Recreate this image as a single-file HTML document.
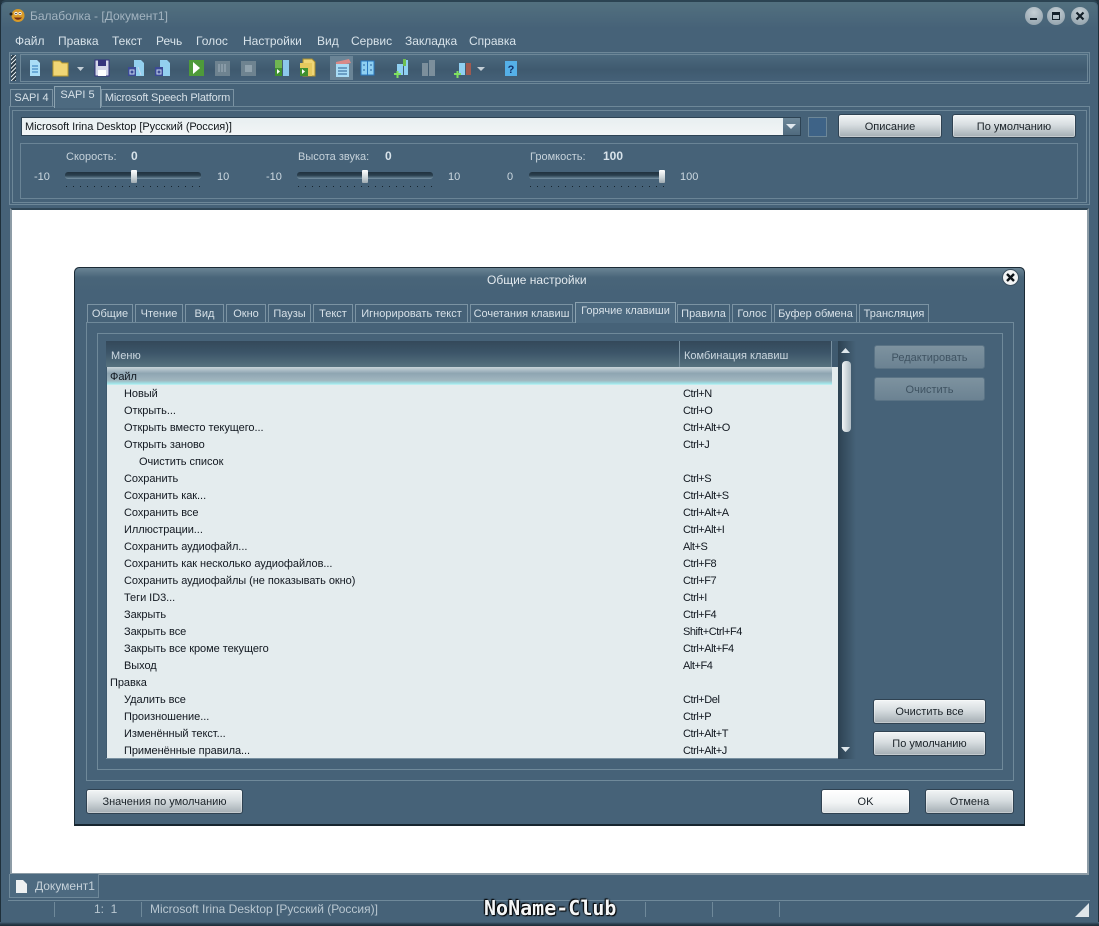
<!DOCTYPE html>
<html><head><meta charset="utf-8"><style>
html,body{margin:0;padding:0;width:1099px;height:926px;overflow:hidden;background:#22333f}
body{position:relative;font-family:"Liberation Sans","Noto Sans CJK SC",sans-serif;font-size:11px;filter:blur(.3px)}
div,span,svg{position:absolute;box-sizing:border-box}
.t{white-space:nowrap;line-height:14px;color:#ccd8e0}
.m{white-space:nowrap;line-height:14px;color:#d8e3ea;font-size:12px;top:34px}
.k{white-space:nowrap;line-height:14px;color:#121820;letter-spacing:-.05px}
.c{letter-spacing:-.45px}
.b{border-radius:3px;background:linear-gradient(#f2f5f6,#d7dde0 45%,#a3adb3);border:1px solid #2f4252;color:#1a2228;text-align:center;line-height:25px;box-shadow:inset 0 0 0 1px rgba(255,255,255,.35)}
.d{border-radius:3px;background:linear-gradient(#7d929f,#6b8292);color:#3f5362;text-align:center;line-height:24px;border:1px solid #5a7385}
.tab{top:304px;height:18px;background:#466278;border:1px solid #7b93a3;border-bottom:none;text-align:center;color:#d6e0e7;line-height:19px;white-space:nowrap}
.tr{height:7px;width:136px;top:172px;border-radius:3px;background:linear-gradient(#20323f,#2b404f 55%,#5e7a8c);border-bottom:1px solid #6f899a}
.th{width:6px;height:13px;top:170px;border-radius:1px;background:linear-gradient(#fff,#c9d2d6 60%,#9fabb2)}
.ti{height:1px;width:136px;top:186px;background:repeating-linear-gradient(90deg,#16242e 0 1px,transparent 1px 7px)}
</style></head><body>
<div style="left:0;top:0;width:1099px;height:926px;border-radius:6px 6px 0 0;background:#466278;border:1px solid #1e2f3a;border-top:2px solid #2b4352"></div>
<div style="left:2px;top:2px;width:1095px;height:26px;background:linear-gradient(#52707f,#466278);border-radius:5px 5px 0 0"></div>

<svg style="left:9px;top:8px" width="16" height="15" viewBox="0 0 16 15"><circle cx="9" cy="7.5" r="6.5" fill="#d89a28"/><circle cx="7" cy="5.5" r="1.6" fill="#fff"/><circle cx="11" cy="5.5" r="1.6" fill="#fff"/><circle cx="7" cy="5.5" r=".8" fill="#222"/><circle cx="11" cy="5.5" r=".8" fill="#222"/><path d="M5 9.5c2 3 6 3 8 0z" fill="#7a2d10"/><circle cx="2" cy="6" r="1.5" fill="#222"/></svg>
<div class="t" style="left:30px;top:9px;color:#a3b4c0;font-size:12px">Балаболка - [Документ1]</div>

<div style="left:1025px;top:7px;width:18px;height:18px;border-radius:9px;background:radial-gradient(circle at 50% 30%,#c6d0d6,#8a9ba6)"></div>
<div style="left:1030px;top:18px;width:7px;height:2px;background:#14202a"></div>
<div style="left:1047px;top:7px;width:18px;height:18px;border-radius:9px;background:radial-gradient(circle at 50% 30%,#c6d0d6,#8a9ba6)"></div>
<div style="left:1052px;top:12px;width:8px;height:8px;border:1px solid #14202a;border-top:3px solid #14202a"></div>
<div style="left:1071px;top:7px;width:18px;height:18px;border-radius:9px;background:radial-gradient(circle at 50% 30%,#c6d0d6,#8a9ba6)"></div>
<svg style="left:1075px;top:11px" width="10" height="10"><path d="M1.5 1.5l7 7M8.5 1.5l-7 7" stroke="#14202a" stroke-width="2.2"/></svg>

<div class="m" style="left:15px">Файл</div><div class="m" style="left:58px">Правка</div><div class="m" style="left:112px">Текст</div><div class="m" style="left:156px">Речь</div><div class="m" style="left:196px">Голос</div><div class="m" style="left:243px">Настройки</div><div class="m" style="left:317px">Вид</div><div class="m" style="left:351px">Сервис</div><div class="m" style="left:405px">Закладка</div><div class="m" style="left:469px">Справка</div>

<div style="left:9px;top:52px;width:1081px;height:32px;border:1px solid #6d8798;background:linear-gradient(#4d6b80,#3f5a6f 55%,#46627a)"></div>
<div style="left:20px;top:54px;width:1068px;height:28px;border:1px solid #6d8798"></div>
<div style="left:11px;top:55px;width:5px;height:26px;background:repeating-linear-gradient(135deg,#dfe6ea 0 1px,#2a3d4a 1px 3px)"></div>
<div style="left:330px;top:56px;width:23px;height:24px;background:#6a8496"></div>

<svg style="left:0;top:50px" width="540" height="36" viewBox="0 0 540 36">
<path d="M30 10h7l3 3v13H30z" fill="#a9ddf6"/><path d="M32 16h6M32 19h6M32 22h6" stroke="#2a78b8"/>
<path d="M53 14v-3h7l2 2h6v13H53z" fill="#f0d676" stroke="#b89a30"/>
<path d="M77 17h7l-3.500 4z" fill="#c3ced6"/>
<path d="M95 10h14v16H95z" fill="#d5d8ea" stroke="#34337c"/><path d="M98 10h8v6h-8z" fill="#34337c"/><path d="M98 20h8v6h-8z" fill="#fff"/>
<path d="M134 10h7l3 3v13h-12v-8h2z" fill="#93d0ef"/><path d="M128 17h8v9h-8z" fill="#3b4a96"/><path d="M130 20h4v4h-4zM138 17l3 8" stroke="#c8d8f0" fill="none"/>
<path d="M160 10h7l3 3v13h-12v-8h2z" fill="#93d0ef"/><path d="M155 17h8v9h-8z" fill="#3b4a96"/><path d="M157 20h4v4h-4z" stroke="#c8d8f0" fill="none"/>
<rect x="189" y="10" width="15" height="16" fill="#4e9a3a"/><path d="M193 12l7 6-7 6z" fill="#fff"/>
<rect x="215" y="11" width="15" height="15" fill="#6e8390"/><path d="M219 14v8M222 14v8M225 14v8" stroke="#90a2ad" stroke-width="1.500"/>
<rect x="241" y="11" width="15" height="15" fill="#6e8390"/><rect x="245" y="15" width="7" height="7" fill="#90a2ad"/>
<rect x="275" y="10" width="7" height="10" fill="#70b552"/><rect x="283" y="10" width="6" height="16" fill="#8cc8ec"/><rect x="275" y="18" width="7" height="8" fill="#3f9030"/><path d="M277 19l3 2.500-3 2.500z" fill="#fff"/>
<path d="M303 9h9l3 3v14h-12z" fill="#f0d676" stroke="#a88e30"/><rect x="300" y="13" width="12" height="13" fill="#e6c95e"/><rect x="300" y="18" width="8" height="8" fill="#3f9030"/><path d="M302 19l3 2.500-3 2.500z" fill="#fff"/>
<path d="M336 12l13-3 2 4-15 3z" fill="#d88a88"/><rect x="336" y="14" width="13" height="13" fill="#a9ddf6"/><path d="M338 18h9M338 21h9M338 24h9" stroke="#2a5f92"/>
<path d="M361 11h6v14h-6zM368 11h6v14h-6z" fill="#8fd0f2"/><path d="M361 11h13v14h-13z" fill="none" stroke="#2a78c0"/><path d="M367.500 11v14" stroke="#2a78c0"/><path d="M363 15h2M370 15h2M363 20h2M370 20h2" stroke="#245f9c"/>
<path d="M397 14h6v11h-6zM404 10h4v15h-4z" fill="#8fd0f2"/><rect x="403" y="9" width="3" height="7" fill="#70c050"/><path d="M394 24h7M397.500 21v7" stroke="#7fe060" stroke-width="2"/>
<path d="M422 13h6v13h-6zM429 10h6v16h-6z" fill="#7c8f9c"/>
<path d="M459 13h6v12h-6z" fill="#8fd0f2"/><path d="M466 13h5v12h-5z" fill="#a05a50"/><path d="M454 24h7M457.500 21v7" stroke="#7fe060" stroke-width="2"/>
<path d="M477 17h8l-4 4z" fill="#c3ced6"/>
<rect x="505" y="11" width="12" height="15" fill="#55b0e8"/><text x="511" y="23" font-size="11" font-weight="bold" text-anchor="middle" fill="#12306a" font-family="Liberation Sans">?</text>
</svg>

<div class="tab" style="left:10px;top:89px;width:43px;height:18px;line-height:16px">SAPI 4</div>
<div class="tab" style="left:101px;top:89px;width:133px;height:18px;line-height:16px;letter-spacing:-.15px">Microsoft Speech Platform</div>
<div style="left:9px;top:106px;width:1081px;height:99px;border:1px solid #6d8798"></div>
<div style="left:12px;top:110px;width:1075px;height:93px;border:1px solid #6d8798"></div>
<div class="tab" style="left:54px;top:86px;width:47px;height:22px;line-height:16px;border-color:#8ba2b0;background:#4d6a80">SAPI 5</div>

<div style="left:21px;top:117px;width:780px;height:19px;background:#2d4354"></div>
<div style="left:22px;top:118px;width:761px;height:17px;background:linear-gradient(#e8eff1,#f2f5f6)"></div>
<div class="k" style="left:25px;top:120px;color:#10161a;letter-spacing:-.05px">Microsoft Irina Desktop [Русский (Россия)]</div>
<div style="left:783px;top:118px;width:17px;height:17px;background:linear-gradient(#6d8798,#4f6a7e)"></div>
<svg style="left:786px;top:124px" width="11" height="6"><path d="M0 0h10l-5 5z" fill="#e0e8ee"/></svg>
<div style="left:808px;top:117px;width:19px;height:20px;background:#3e6387;border:1px solid #6d8798"></div>
<div class="b" style="left:838px;top:114px;width:104px;height:24px">Описание</div>
<div class="b" style="left:952px;top:114px;width:124px;height:24px">По умолчанию</div>

<div style="left:20px;top:143px;width:1058px;height:56px;border:1px solid #6a8496"></div>
<div class="t" style="left:66px;top:150px;color:#c6d2da">Скорость:</div><div class="t" style="left:131px;top:149px;font-weight:bold;font-size:12px;color:#d8e3ea">0</div>
<div class="t" style="left:298px;top:150px;color:#c6d2da">Высота звука:</div><div class="t" style="left:385px;top:149px;font-weight:bold;font-size:12px;color:#d8e3ea">0</div>
<div class="t" style="left:530px;top:150px;color:#c6d2da">Громкость:</div><div class="t" style="left:603px;top:149px;font-weight:bold;font-size:12px;color:#d8e3ea">100</div>
<div class="t" style="left:34px;top:170px">-10</div><div class="t" style="left:217px;top:170px">10</div>
<div class="t" style="left:266px;top:170px">-10</div><div class="t" style="left:448px;top:170px">10</div>
<div class="t" style="left:507px;top:170px">0</div><div class="t" style="left:680px;top:170px">100</div>
<div class="tr" style="left:65px"></div><div class="th" style="left:131px"></div><div class="ti" style="left:66px"></div>
<div class="tr" style="left:297px"></div><div class="th" style="left:362px"></div><div class="ti" style="left:298px"></div>
<div class="tr" style="left:529px"></div><div class="th" style="left:659px"></div><div class="ti" style="left:530px"></div>

<div style="left:10px;top:208px;width:1079px;height:667px;border:2px solid #8d9ca6;border-top-color:#2f4656;background:#fff"></div>

<!-- dialog -->
<div style="left:74px;top:267px;width:951px;height:559px;background:#466278;border:1px solid #1b2a35;border-bottom:2px solid #17252f;border-radius:5px 5px 0 0"></div>
<div style="left:75px;top:268px;width:949px;height:24px;background:linear-gradient(#6a8494,#496579 40%,#466278);border-radius:5px 5px 0 0"></div>
<div class="t" style="left:487px;top:273px;color:#e2e9ee;font-size:12px">Общие настройки</div>
<div style="left:1002px;top:269px;width:17px;height:17px;border-radius:9px;background:#f2f4f5;border:1px solid #3b5060"></div>
<svg style="left:1005px;top:272px" width="11" height="11"><path d="M2 2l7 7M9 2l-7 7" stroke="#0c1318" stroke-width="2.400"/></svg>

<div style="left:86px;top:322px;width:928px;height:459px;border:1px solid #6f899a"></div>
<div style="left:97px;top:333px;width:906px;height:437px;border:1px solid #6f899a"></div>
<div class="tab" style="left:87px;width:46px">Общие</div>
<div class="tab" style="left:135px;width:48px">Чтение</div>
<div class="tab" style="left:185px;width:39px">Вид</div>
<div class="tab" style="left:226px;width:40px">Окно</div>
<div class="tab" style="left:268px;width:43px">Паузы</div>
<div class="tab" style="left:313px;width:40px">Текст</div>
<div class="tab" style="left:355px;width:113px">Игнорировать текст</div>
<div class="tab" style="left:470px;width:103px">Сочетания клавиш</div>
<div class="tab" style="left:575px;top:302px;width:101px;height:21px;line-height:17px;border-color:#8ba2b0;background:#4d6a80">Горячие клавиши</div>
<div class="tab" style="left:677px;width:53px">Правила</div>
<div class="tab" style="left:732px;width:40px">Голос</div>
<div class="tab" style="left:774px;width:83px">Буфер обмена</div>
<div class="tab" style="left:859px;width:70px">Трансляция</div>

<div style="left:106px;top:341px;width:750px;height:418px;background:#3f5a6f;border-bottom:1px solid #7890a0"></div>
<div style="left:106px;top:341px;width:726px;height:26px;background:linear-gradient(#34495a,#3c5569 45%,#57727f)"></div>
<div style="left:679px;top:341px;width:1px;height:26px;background:#7890a0"></div>
<div style="left:831px;top:341px;width:1px;height:26px;background:#7890a0"></div>
<div style="left:838px;top:341px;width:18px;height:418px;background:linear-gradient(90deg,#2d4252,#466278)"></div>
<div class="t" style="left:111px;top:349px">Меню</div>
<div class="t" style="left:684px;top:349px">Комбинация клавиш</div>
<div style="left:107px;top:367px;width:731px;height:391px;background:#e4ecee"></div>
<div style="left:107px;top:367px;width:725px;height:18px;background:linear-gradient(#c9d5da,#8ea5b2 35%,#a1b6bf 75%,#9fe3e8 92%,#c8f2f2)"></div>
<svg style="left:841px;top:348px" width="10" height="6"><path d="M0 5h9l-4.500-5z" fill="#dfe7ec"/></svg>
<div style="left:842px;top:361px;width:9px;height:71px;border-radius:4px;background:linear-gradient(90deg,#f2f5f6,#aebbc3)"></div>
<svg style="left:841px;top:747px" width="10" height="6"><path d="M0 0h9l-4.500 5z" fill="#dfe7ec"/></svg>

<div class="k" style="left:110px;top:370px">Файл</div>
<div class="k" style="left:124px;top:387px">Новый</div><div class="k c" style="left:683px;top:387px">Ctrl+N</div>
<div class="k" style="left:124px;top:404px">Открыть...</div><div class="k c" style="left:683px;top:404px">Ctrl+O</div>
<div class="k" style="left:124px;top:421px">Открыть вместо текущего...</div><div class="k c" style="left:683px;top:421px">Ctrl+Alt+O</div>
<div class="k" style="left:124px;top:438px">Открыть заново</div><div class="k c" style="left:683px;top:438px">Ctrl+J</div>
<div class="k" style="left:139px;top:455px">Очистить список</div>
<div class="k" style="left:124px;top:472px">Сохранить</div><div class="k c" style="left:683px;top:472px">Ctrl+S</div>
<div class="k" style="left:124px;top:489px">Сохранить как...</div><div class="k c" style="left:683px;top:489px">Ctrl+Alt+S</div>
<div class="k" style="left:124px;top:506px">Сохранить все</div><div class="k c" style="left:683px;top:506px">Ctrl+Alt+A</div>
<div class="k" style="left:124px;top:523px">Иллюстрации...</div><div class="k c" style="left:683px;top:523px">Ctrl+Alt+I</div>
<div class="k" style="left:124px;top:540px">Сохранить аудиофайл...</div><div class="k c" style="left:683px;top:540px">Alt+S</div>
<div class="k" style="left:124px;top:557px">Сохранить как несколько аудиофайлов...</div><div class="k c" style="left:683px;top:557px">Ctrl+F8</div>
<div class="k" style="left:124px;top:574px">Сохранить аудиофайлы (не показывать окно)</div><div class="k c" style="left:683px;top:574px">Ctrl+F7</div>
<div class="k" style="left:124px;top:591px">Теги ID3...</div><div class="k c" style="left:683px;top:591px">Ctrl+I</div>
<div class="k" style="left:124px;top:608px">Закрыть</div><div class="k c" style="left:683px;top:608px">Ctrl+F4</div>
<div class="k" style="left:124px;top:625px">Закрыть все</div><div class="k c" style="left:683px;top:625px">Shift+Ctrl+F4</div>
<div class="k" style="left:124px;top:642px">Закрыть все кроме текущего</div><div class="k c" style="left:683px;top:642px">Ctrl+Alt+F4</div>
<div class="k" style="left:124px;top:659px">Выход</div><div class="k c" style="left:683px;top:659px">Alt+F4</div>
<div class="k" style="left:110px;top:676px">Правка</div>
<div class="k" style="left:124px;top:693px">Удалить все</div><div class="k c" style="left:683px;top:693px">Ctrl+Del</div>
<div class="k" style="left:124px;top:710px">Произношение...</div><div class="k c" style="left:683px;top:710px">Ctrl+P</div>
<div class="k" style="left:124px;top:727px">Изменённый текст...</div><div class="k c" style="left:683px;top:727px">Ctrl+Alt+T</div>
<div class="k" style="left:124px;top:744px">Применённые правила...</div><div class="k c" style="left:683px;top:744px">Ctrl+Alt+J</div>

<div class="d" style="left:874px;top:345px;width:111px;height:24px">Редактировать</div>
<div class="d" style="left:874px;top:377px;width:111px;height:24px">Очистить</div>
<div class="b" style="left:873px;top:699px;width:113px;height:25px">Очистить все</div>
<div class="b" style="left:873px;top:731px;width:113px;height:25px">По умолчанию</div>
<div class="b" style="left:86px;top:789px;width:157px;height:25px">Значения по умолчанию</div>
<div class="b" style="left:821px;top:789px;width:89px;height:25px;background:linear-gradient(#fff,#f2f4f5 55%,#d4dadd)">OK</div>
<div class="b" style="left:925px;top:789px;width:89px;height:25px">Отмена</div>

<!-- bottom -->
<div style="left:9px;top:874px;width:90px;height:24px;background:#4d6a80;border:1px solid #6f899a;border-top:none"></div>
<svg style="left:15px;top:879px" width="13" height="15"><path d="M1 1h7l4 4v9H1z" fill="#eef1f2"/></svg>
<div class="t" style="left:35px;top:879px;font-size:12px;color:#c6d2da">Документ1</div>
<div style="left:8px;top:900px;width:1082px;height:1px;background:#6f899a"></div>
<div style="left:54px;top:902px;width:1px;height:15px;background:#6f899a"></div>
<div style="left:141px;top:902px;width:1px;height:15px;background:#6f899a"></div>
<div style="left:645px;top:902px;width:1px;height:15px;background:#6f899a"></div>
<div style="left:712px;top:902px;width:1px;height:15px;background:#6f899a"></div>
<div style="left:779px;top:902px;width:1px;height:15px;background:#6f899a"></div>
<div class="t" style="left:94px;top:902px;font-size:12px;color:#b9c7d1">1:&nbsp; 1</div>
<div class="t" style="left:150px;top:902px;font-size:12px;color:#b9c7d1">Microsoft Irina Desktop [Русский (Россия)]</div>
<div class="t" style="left:484px;top:896px;font-family:'DejaVu Sans Mono','Liberation Mono',monospace;font-weight:bold;font-size:20px;line-height:24px;color:#f4f6f7;text-shadow:0 0 2px #000,1px 1px 1px #000,-1px -1px 1px #000">NoName-Club</div>
<svg style="left:1075px;top:902px" width="15" height="16"><path d="M14 1v14H0z" fill="#dfe6ea"/></svg>
<div style="left:0;top:922px;width:1099px;height:4px;background:linear-gradient(#466278,#2b3f4e 50%,#1c2b36)"></div>
</body></html>
